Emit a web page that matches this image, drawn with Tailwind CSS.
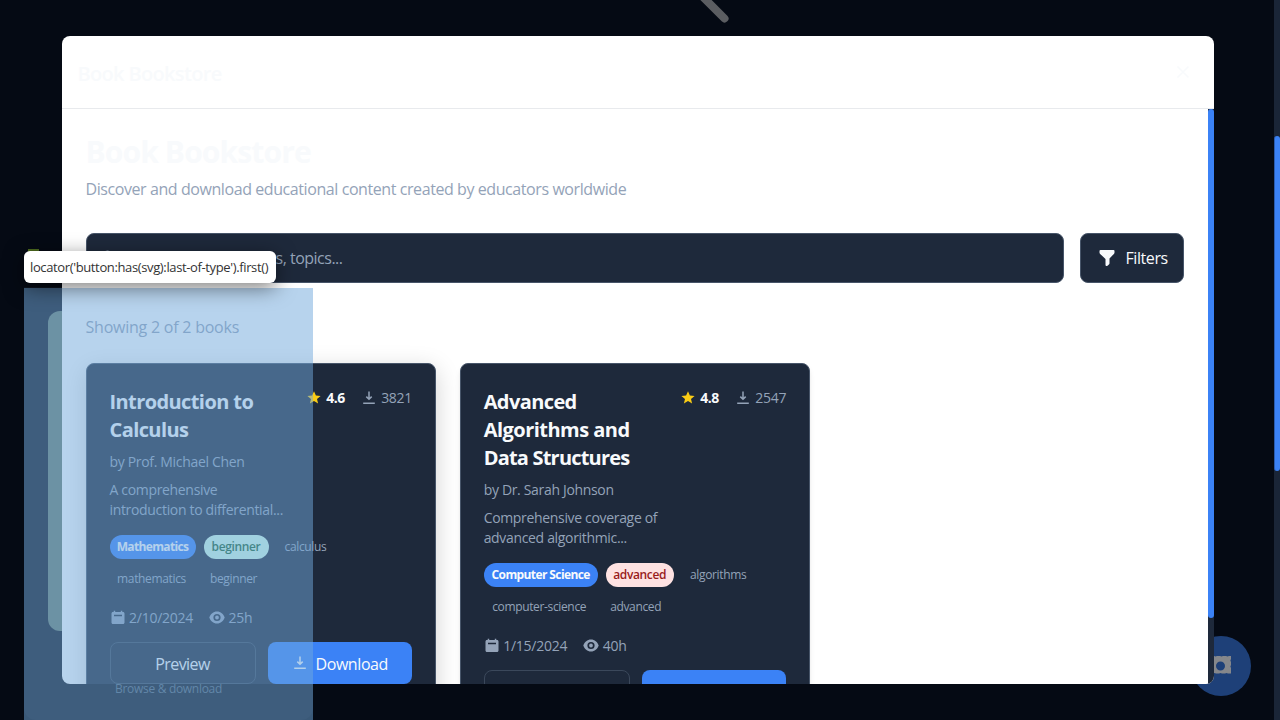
<!DOCTYPE html>
<html lang="en">
<head>
<meta charset="utf-8">
<title>Book Bookstore</title>
<script src="https://cdn.jsdelivr.net/npm/@tailwindcss/browser@4"></script>
</head>
<body class="h-[720px] overflow-hidden bg-[#050a14] font-['Open_Sans','Noto_Sans',sans-serif] relative">
<svg width="0" height="0" class="absolute">
  <defs>
    <symbol id="star" viewBox="0 0 14 14"><path fill="#facc15" d="M7 .3 8.900 4.600 13.600 5 10 8 11.100 12.600 7 10.100 2.900 12.600 4 8 .4 5 5.100 4.600Z"/></symbol>
    <symbol id="down" viewBox="0 0 14 14"><path fill="none" stroke="currentColor" stroke-width="1.500" d="M7 .5v7.500M4.300 5.600 7 8.300l2.700-2.700M1.200 12.300h11.600"/></symbol>
    <symbol id="cal" viewBox="0 0 16 16"><path fill="currentColor" fill-rule="evenodd" d="M3.700.7h1.500v1.300h5.600V.7h1.500v1.300h.7c.9 0 1.500.6 1.500 1.500v9c0 .9-.6 1.500-1.500 1.500H3c-.9 0-1.500-.6-1.500-1.500v-9C1.500 2.600 2.100 2 3 2h.7ZM4 4.800v1.400h8V4.800Z"/></symbol>
    <symbol id="eye" viewBox="0 0 16 16"><path fill="currentColor" fill-rule="evenodd" d="M8 1.500c3.700 0 6.400 2.500 7.700 6-1.300 3.500-4 6-7.700 6s-6.400-2.500-7.700-6c1.300-3.500 4-6 7.700-6ZM8 3.900a3.600 3.600 0 1 0 0 7.200 3.600 3.600 0 0 0 0-7.200ZM8 5.600a1.900 1.900 0 1 1 0 3.800 1.900 1.900 0 0 1 0-3.800Z"/></symbol>
  </defs>
</svg>

<!-- page behind the dialog -->
<svg class="absolute left-[690px] top-0" width="50" height="30"><path d="M11 -5 34.500 18.500" stroke="#5b5d61" stroke-width="8" stroke-linecap="round"/></svg>
<div class="absolute left-6 top-[240px] w-[289px] h-[480px] rounded-xl bg-[#0d131e]"></div>
<div class="absolute left-0 top-[240px] w-[62px] h-[47px] bg-[#050a14]"></div>
<div class="absolute left-[28px] top-[249px] w-[11px] h-3 bg-[#4d6b1e]"></div>
<div class="absolute left-[48px] top-[311px] w-[200px] h-[320px] rounded-xl bg-[#697c6c]"></div>
<div class="absolute left-[1190.5px] top-[636px] size-[60px] rounded-full bg-[#1e4078]"></div>
<svg class="absolute left-[1209px] top-[654px]" width="24" height="24"><path fill="#85878b" fill-rule="evenodd" d="M2 2h3l1.500.6L8 2h3l1.500.6L14 2h3l1.500.6L20 2h2v3l-.6 1.500L22 8v3l-.6 1.500L22 14v5.500h-3l-1.500-.6-1.500.6h-3l-1.500-.6-1.500.6H7l-1.500-.6-1.500.6H2ZM11.500 7.500a4.500 4.500 0 1 0 0 9 4.500 4.500 0 0 0 0-9Z"/></svg>
<div class="absolute right-0 top-0 w-[6px] h-full bg-[#1a2537]"><div class="mt-[136px] h-[335px] rounded-full bg-[#3b82f6] border-l border-[#2b5cae]"></div></div>

<!-- dialog -->
<div class="absolute left-[61.5px] top-9 w-[1152px] h-[648px] rounded-lg overflow-hidden bg-white flex flex-col">
  <header class="h-[73px] shrink-0 border-b border-[#e8eaed] flex items-center justify-between pl-4 pr-6">
    <h2 class="text-xl tracking-[-0.66px] font-semibold text-[#f8fafc] pt-1">Book Bookstore</h2>
    <svg width="14" height="14" class="text-[#f8fafc]"><path d="M1.500 1.500 12.500 12.500M12.500 1.500 1.500 12.500" stroke="currentColor" stroke-width="1.500"/></svg>
  </header>
  <div class="flex flex-1 min-h-0">
    <main class="w-[1146.5px] p-6 flex flex-col overflow-hidden">
      <h1 class="pt-px -mb-px text-[30px] leading-9 tracking-[-0.87px] font-bold text-[#f8fafc] whitespace-nowrap shrink-0">Book Bookstore</h1>
      <p class="mt-2 text-base leading-6 tracking-[-0.42px] text-[#94a3b8] shrink-0">Discover and download educational content created by educators worldwide</p>
      <div class="mt-8 flex gap-4 h-[49.500px] shrink-0">
        <div class="flex-1 rounded-lg bg-[#1e293b] border border-[#475569] flex items-center pl-[14px] gap-3 text-[#94a3b8] text-base">
          <svg width="16" height="16" viewBox="0 0 16 16" fill="none" stroke="currentColor" stroke-width="2"><circle cx="6.500" cy="6.500" r="5"/><path d="m10.500 10.500 4.500 4.500"/></svg>
          <span class="w-[214px] whitespace-nowrap flex justify-end tracking-[-0.5px] pt-px">Search books, authors, topics...</span>
        </div>
        <div class="w-[104px] rounded-lg bg-[#1e293b] border border-[#475569] flex items-center pl-[18px] text-[#f8fafc] text-base">
          <svg width="16" height="18" viewBox="0 0 16 18" fill="currentColor"><path d="M1.500 1h13q1 0 1 1v1.500q0 .8-.6 1.400L10.500 9.500v4.800q0 .8-.6 1.200l-1.400 1.200Q6.500 17.600 6.500 15.800V10L1.100 4.900Q.5 4.300.5 3.500V2q0-1 1-1Z"/></svg>
          <span class="ml-[10.500px] tracking-[-0.42px] pt-px">Filters</span>
        </div>
      </div>
      <p class="mt-8 text-base leading-6 tracking-[-0.23px] text-[#94a3b8] shrink-0">Showing 2 of 2 books</p>
      <div class="mt-6 grid grid-cols-3 gap-6 items-start text-[#94a3b8] text-sm shrink-0">
        <article class="h-[346px] rounded-lg bg-[#1e293b] border border-[#475569] p-6 px-[23px] shadow-[0_6px_24px_rgba(0,0,0,0.18)] flex flex-col">
          <div class="flex justify-between">
            <div class="whitespace-nowrap tracking-[-0.33px]">
              <h3 class="text-xl leading-7 tracking-[-0.59px] font-bold text-[#f8fafc]">Introduction to<br>Calculus</h3>
              <p class="mt-2 leading-5">by Prof. Michael Chen</p>
              <p class="mt-2 leading-5">A comprehensive<br>introduction to differential...</p>
            </div>
            <div class="flex h-5 items-center whitespace-nowrap">
              <svg width="14" height="14"><use href="#star"/></svg><b class="ml-[5.500px] w-[36px] font-bold tracking-[-0.5px] text-[#f8fafc]">4.6</b>
              <svg width="14" height="14"><use href="#down"/></svg><span class="ml-[5px] w-[30.500px] tracking-[-0.3px]">3821</span>
            </div>
          </div>
          <div class="mt-[15px] flex flex-wrap gap-2 text-xs leading-6 tracking-[-0.35px] whitespace-nowrap">
            <span class="w-[86px] h-6 rounded-full bg-[#3b82f6] text-[#f8fafc] font-bold tracking-[-0.65px] text-center">Mathematics</span>
            <span class="w-[65px] h-6 rounded-full bg-[#d1fae5] text-[#166534] font-semibold text-center">beginner</span>
            <span class="w-[58px] h-6 text-center">calculus</span>
            <span class="w-[84px] h-6 text-center">mathematics</span>
            <span class="w-[64px] h-6 text-center">beginner</span>
          </div>
          <div class="mt-[17px] h-5 flex items-center tracking-[-0.25px]">
            <svg width="16" height="16"><use href="#cal"/></svg><span class="ml-[3.500px] w-[79.500px]">2/10/2024</span>
            <svg width="16" height="16"><use href="#eye"/></svg><span class="ml-1">25h</span>
          </div>
          <div class="mt-[14.500px] flex gap-3 h-[42px] shrink-0 text-base text-[#f8fafc]">
            <div class="w-[146px] rounded-lg border border-[#3b485b] flex items-center justify-center tracking-[-0.55px] pt-px">Preview</div>
            <div class="w-[144px] rounded-lg bg-[#3b82f6] flex items-center pl-[25px] gap-[9px]"><svg width="14" height="14"><use href="#down"/></svg><span class="tracking-[-0.42px] pt-px">Download</span></div>
          </div>
        </article>
        <article class="h-[374px] rounded-lg bg-[#1e293b] border border-[#475569] p-6 px-[23px] shadow-md flex flex-col">
          <div class="flex justify-between">
            <div class="whitespace-nowrap tracking-[-0.33px]">
              <h3 class="text-xl leading-7 tracking-[-0.7px] font-bold text-[#f8fafc]"><span class="tracking-[-0.6px]">Advanced</span><br><span class="tracking-[-0.52px]">Algorithms and</span><br><span class="tracking-[-0.8px]">Data Structures</span></h3>
              <p class="mt-2 leading-5">by Dr. Sarah Johnson</p>
              <p class="mt-2 leading-5">Comprehensive coverage of<br>advanced algorithmic...</p>
            </div>
            <div class="flex h-5 items-center whitespace-nowrap">
              <svg width="14" height="14"><use href="#star"/></svg><b class="ml-[5.500px] w-[36px] font-bold tracking-[-0.5px] text-[#f8fafc]">4.8</b>
              <svg width="14" height="14"><use href="#down"/></svg><span class="ml-[5px] w-[30.500px] tracking-[-0.3px]">2547</span>
            </div>
          </div>
          <div class="mt-[15px] flex flex-wrap gap-2 text-xs leading-6 tracking-[-0.35px] whitespace-nowrap">
            <span class="w-[114px] h-6 rounded-full bg-[#3b82f6] text-[#f8fafc] font-bold tracking-[-0.6px] text-center">Computer Science</span>
            <span class="w-[68px] h-6 rounded-full bg-[#fee2e2] text-[#991b1b] font-semibold text-center">advanced</span>
            <span class="w-[73px] h-6 text-center">algorithms</span>
            <span class="w-[111px] h-6 text-center">computer-science</span>
            <span class="w-[66px] h-6 text-center">advanced</span>
          </div>
          <div class="mt-[17px] h-5 flex items-center tracking-[-0.25px]">
            <svg width="16" height="16"><use href="#cal"/></svg><span class="ml-[3.500px] w-[79.500px]">1/15/2024</span>
            <svg width="16" height="16"><use href="#eye"/></svg><span class="ml-1">40h</span>
          </div>
          <div class="mt-[14.500px] flex gap-3 h-[42px] shrink-0 text-base text-[#f8fafc]">
            <div class="w-[146px] rounded-lg border border-[#3b485b]"></div>
            <div class="w-[144px] rounded-lg bg-[#3b82f6]"></div>
          </div>
        </article>
      </div>
    </main>
    <div class="flex-1 bg-[#1e293b]"><div class="h-[509px] rounded-sm bg-[#3b82f6]"></div></div>
  </div>
</div>

<!-- locator highlight -->
<p class="absolute left-[115px] top-[680px] h-[18px] text-xs leading-[18px] tracking-[-0.3px] text-[#556677] whitespace-nowrap [clip-path:inset(4px_0_0_0)]">Browse &amp; download</p>
<div class="absolute left-6 top-[287.5px] w-[289px] h-[433px] bg-[#6fa8dc]/50"></div>
<div class="absolute left-6 top-[251px] w-[252px] h-[31.500px] rounded-md bg-white shadow-[0_5px_20px_rgba(0,0,0,0.5)] pl-[6px] pt-px flex items-center text-[13px] tracking-[-0.37px] text-[#333] whitespace-nowrap"><span>locator('button:has(svg):last-of-type').first()</span></div>
</body>
</html>
